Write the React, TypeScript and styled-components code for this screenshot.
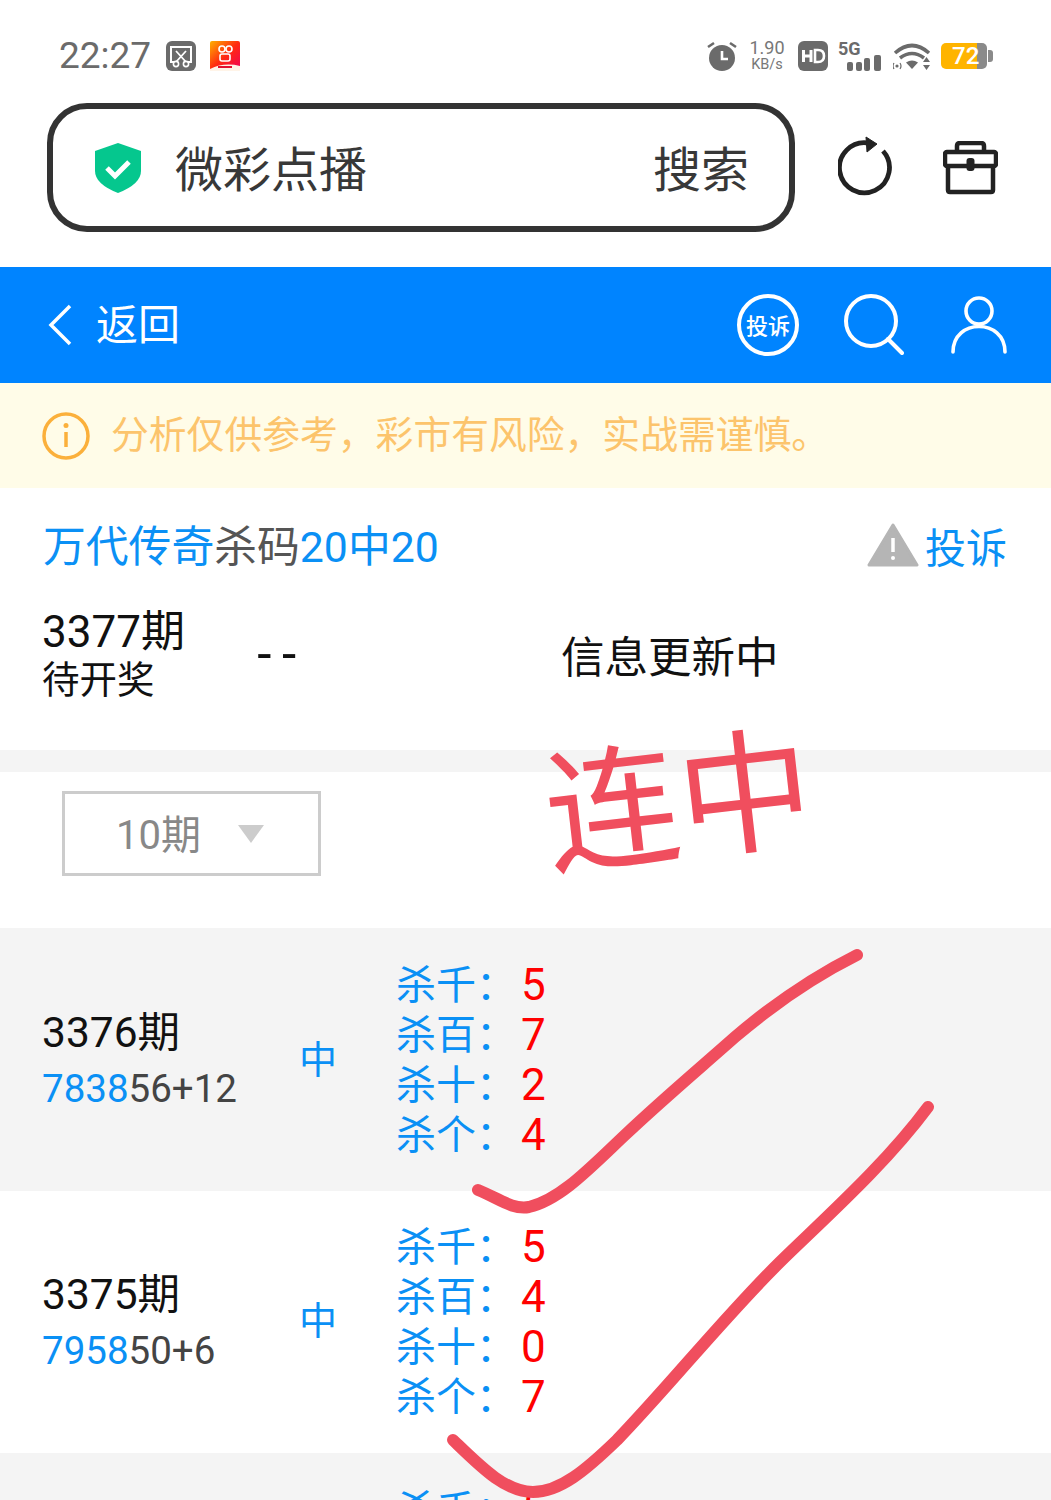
import { createGlobalStyle, styled } from "styled-components";

const GlobalStyle = createGlobalStyle`
  html, body {
    margin: 0;
    padding: 0;
    background: #fff;
  }
  body {
    font-family: "Roboto", "Noto Sans CJK SC", sans-serif;
  }
`;

const Page = styled.div`
  position: relative;
  width: 1051px;
  height: 1500px;
  overflow: hidden;
  background: #fff;
`;

/* phone status bar */
const StatusBar = styled.div`
  height: 95px;
  padding: 8px 58px 0 59px;
  display: flex;
  align-items: center;
  justify-content: space-between;
`;

const StatusGroup = styled.div`
  display: flex;
  align-items: center;
`;

const Clock = styled.span`
  font-size: 37px;
  line-height: 40px;
  color: #6b6b6b;
  margin-right: 15px;
`;

const Speed = styled.div`
  display: flex;
  flex-direction: column;
  align-items: center;
  width: 36px;
  margin: 0 13px 0 11px;
  color: #777;
  font-size: 18px;
  line-height: 17px;
  white-space: nowrap;
  small {
    margin-top: 2px;
    font-size: 14.500px;
    line-height: 14px;
  }
`;

const Battery = styled.div`
  width: 46px;
  height: 26px;
  margin-left: 10px;
  border-radius: 5px;
  overflow: hidden;
  background: linear-gradient(to right, #ffb400 0 36px, #8a8a8a 36px);
  color: #fff;
  font-size: 24px;
  font-weight: 500;
  line-height: 27px;
  padding-left: 11px;
  box-sizing: border-box;
`;

const BatteryTip = styled.div`
  width: 5px;
  height: 12px;
  margin-left: 1px;
  border-radius: 0 3px 3px 0;
  background: #8a8a8a;
`;

/* browser address row */
const AddressRow = styled.div`
  display: flex;
  align-items: center;
  padding-left: 47px;
  margin-bottom: 35px;
`;

const AddressBox = styled.div`
  width: 748px;
  height: 129px;
  box-sizing: border-box;
  border: 6px solid #333;
  border-radius: 40px;
  padding: 0 40px 0 42px;
  display: flex;
  align-items: center;
  color: #383838;
  font-size: 48px;
`;

const AddressName = styled.span`
  margin: 0 0 4px 34px;
  flex: 1;
`;

const AddressAction = styled.span`
  margin-bottom: 4px;
`;

const RefreshSlot = styled.div`
  margin-left: 43px;
  display: flex;
`;

const ToolSlot = styled.div`
  margin-left: 49px;
  display: flex;
`;

/* blue app header */
const AppHeader = styled.div`
  height: 116px;
  background: #0084ff;
  padding: 0 44px 0 48px;
  display: flex;
  align-items: center;
  color: #fff;
`;

const BackLabel = styled.span`
  margin: 0 0 8px 23px;
  font-size: 42px;
  flex: 1;
`;

const ComplainBadge = styled.div`
  width: 62px;
  height: 62px;
  box-sizing: border-box;
  border: 4px solid #fff;
  border-radius: 50%;
  padding-bottom: 3px;
  display: flex;
  align-items: center;
  justify-content: center;
  font-size: 22px;
  font-weight: 500;
  white-space: nowrap;
`;

const HeaderIcon = styled.div<{ $gap: number }>`
  margin-left: ${p => p.$gap}px;
  display: flex;
`;

/* notice */
const Notice = styled.div`
  height: 105px;
  background: #fffce8;
  padding-left: 42px;
  display: flex;
  align-items: center;
  color: #fcc46c;
  font-size: 37.800px;
  white-space: nowrap;
`;

const NoticeText = styled.span`
  margin: 0 0 8px 21px;
`;

/* plan info */
const InfoBlock = styled.div`
  height: 262px;
  padding: 24px 44px 0 42px;
  box-sizing: border-box;
`;

const TitleRow = styled.div`
  display: flex;
  align-items: center;
  justify-content: space-between;
  height: 66px;
  color: #0a90f5;
  font-size: 42.800px;
`;

const TitleText = styled.span`
  margin: 0 0 4px 1px;
`;

const Muted = styled.span`
  color: #555;
`;

const Complain = styled.div`
  display: flex;
  align-items: center;
  gap: 6px;
  font-size: 41px;
`;

const PeriodRow = styled.div`
  display: flex;
  align-items: center;
  margin-top: 28px;
  color: #111;
`;

const PeriodColumn = styled.div`
  width: 214px;
  display: flex;
  flex-direction: column;
`;

const PeriodNo = styled.span`
  font-size: 44px;
  line-height: 52px;
`;

const PeriodState = styled.span`
  font-size: 37.500px;
  line-height: 44px;
`;

const Dashes = styled.span`
  width: 305px;
  margin-bottom: 4px;
  font-family: "Liberation Sans", sans-serif;
  font-size: 50px;
  letter-spacing: 8px;
`;

const Updating = styled.span`
  font-size: 43.500px;
`;

const Band = styled.div`
  height: 22px;
  background: #f4f4f4;
`;

/* period filter */
const FilterBar = styled.div`
  height: 156px;
  padding: 19px 0 0 62px;
  box-sizing: border-box;
`;

const Select = styled.div`
  width: 259px;
  height: 85px;
  box-sizing: border-box;
  border: 3px solid #ccc;
  padding-left: 51px;
  display: flex;
  align-items: center;
  color: #888;
  font-size: 40px;
`;

const SelectLabel = styled.span`
  margin-bottom: 4px;
`;

const Caret = styled.i`
  margin-left: 37px;
  width: 0;
  height: 0;
  border-left: 13px solid transparent;
  border-right: 13px solid transparent;
  border-top: 18px solid #ccc;
`;

/* result rows */
const Row = styled.div<{ $grey: boolean }>`
  height: 262.500px;
  box-sizing: border-box;
  background: ${p => (p.$grey ? "#f4f4f4" : "#fff")};
  padding: 0 0 ${p => (p.$grey ? 0 : 2)}px 42px;
  display: flex;
  align-items: center;
`;

const RowInfo = styled.div`
  width: 257px;
  display: flex;
  flex-direction: column;
  padding-top: 4px;
`;

const RowPeriod = styled.span`
  font-size: 42.500px;
  line-height: 56px;
  color: #111;
`;

const RowNumber = styled.span`
  font-size: 38.500px;
  line-height: 56px;
  color: #444;
  b {
    font-weight: 400;
    color: #0a90f5;
  }
`;

const Hit = styled.span`
  width: 97px;
  margin-bottom: 6px;
  font-size: 38px;
  color: #0a90f5;
`;

const KillList = styled.div`
  display: flex;
  flex-direction: column;
`;

const KillLine = styled.div`
  height: 50px;
  display: flex;
  align-items: center;
  color: #0a90f5;
  font-size: 40px;
`;

const KillLabel = styled.span`
  width: 125px;
  margin-bottom: 4px;
`;

const KillValue = styled.span`
  margin-top: 2px;
  color: #f00;
  font-size: 44px;
`;

/* hand written marks on top of the screenshot */
const Scrawl = styled.svg`
  position: absolute;
  left: 0;
  top: 0;
  pointer-events: none;
`;

const ScrawlText = styled.div`
  position: absolute;
  left: 545px;
  top: 730px;
  color: #f04e5e;
  font-size: 134px;
  font-weight: 400;
  line-height: 150px;
  white-space: nowrap;
  transform: rotate(-6.500deg);
  pointer-events: none;
`;

const rows = [
  { period: "3376期", hot: "7838", rest: "56+12", values: [5, 7, 2, 4], grey: true },
  { period: "3375期", hot: "7958", rest: "50+6", values: [5, 4, 0, 7], grey: false },
  { period: "3374期", hot: "", rest: "", values: [5, 0, 0, 0], grey: true },
];

const killLabels = ["杀千：", "杀百：", "杀十：", "杀个："];

const App = () => {
  return (
    <Page>
      <GlobalStyle />

      <StatusBar>
        <StatusGroup>
          <Clock>22:27</Clock>
          <svg width="30" height="30" viewBox="0 0 30 30">
            <rect width="30" height="30" rx="6" fill="#6b6b6b" />
            <path d="M8 21H5V6h20v15h-3" fill="none" stroke="#fff" strokeWidth="2" />
            <path d="M10 10l10 11M20 10L10 21" stroke="#fff" strokeWidth="1.800" />
            <circle cx="10" cy="23" r="2.600" fill="#6b6b6b" stroke="#fff" strokeWidth="1.600" />
            <circle cx="20" cy="23" r="2.600" fill="#6b6b6b" stroke="#fff" strokeWidth="1.600" />
          </svg>
          <svg width="30" height="30" viewBox="0 0 30 30" style={{ marginLeft: 14 }}>
            <defs>
              <linearGradient id="ks" x1="0" y1="0" x2="1" y2="1">
                <stop offset="0" stopColor="#ffb000" />
                <stop offset="0.5" stopColor="#ff2a10" />
                <stop offset="1" stopColor="#f0005a" />
              </linearGradient>
            </defs>
            <rect width="30" height="30" rx="2" fill="url(#ks)" />
            <circle cx="12" cy="8" r="3" fill="none" stroke="#fff" strokeWidth="1.600" />
            <circle cx="19" cy="8" r="3" fill="none" stroke="#fff" strokeWidth="1.600" />
            <rect x="10" y="13" width="10" height="7" rx="2" fill="none" stroke="#fff" strokeWidth="1.600" />
            <path d="M0 28q14-7 30-3v5H0z" fill="#fff4e8" />
            <path d="M8 26h14" stroke="#e01030" strokeWidth="2" />
          </svg>
        </StatusGroup>

        <StatusGroup>
          <svg width="32" height="32" viewBox="0 0 32 32">
            <circle cx="16" cy="18" r="13" fill="#6b6b6b" />
            <path d="M16 11v8h6" fill="none" stroke="#fff" strokeWidth="2.600" />
            <path d="M2 7l6-4M30 7l-6-4" stroke="#6b6b6b" strokeWidth="2.600" />
          </svg>
          <Speed>
            1.90
            <small>KB/s</small>
          </Speed>
          <svg width="30" height="30" viewBox="0 0 30 30">
            <rect width="30" height="30" rx="6" fill="#6b6b6b" />
            <path d="M5.500 9v12M13 9v12M5.500 15H13" stroke="#fff" strokeWidth="3" />
            <path d="M17 9v12h3q6 0 6-6t-6-6z" fill="none" stroke="#fff" strokeWidth="2.600" />
          </svg>
          <svg width="44" height="32" viewBox="0 0 44 32" style={{ marginLeft: 10 }}>
            <text x="0" y="15" fontSize="18" fontWeight="700" fill="#6b6b6b" fontFamily="Roboto">
              5G
            </text>
            <rect x="9" y="22" width="6" height="9" rx="2" fill="#6b6b6b" />
            <rect x="18" y="22" width="6" height="9" rx="2" fill="#6b6b6b" />
            <rect x="26" y="18" width="6" height="13" rx="2" fill="#6b6b6b" />
            <rect x="36" y="15" width="7" height="16" rx="2" fill="#6b6b6b" />
          </svg>
          <svg width="38" height="30" viewBox="0 0 38 30" style={{ marginLeft: 11 }}>
            <path d="M2 12Q19-3 36 12M7 17q12-9 24 0" fill="none" stroke="#6b6b6b" strokeWidth="3.600" />
            <path d="M13 21.500q6-4 12 0L19 28z" fill="#6b6b6b" />
            <path d="M33.500 16l3.500 5h-7zM33.500 29l3.500-5h-7z" fill="#6b6b6b" />
            <circle cx="4" cy="25" r="1.600" fill="#6b6b6b" />
            <path d="M1 22q-2 3 0 6M7 22q2 3 0 6" fill="none" stroke="#6b6b6b" strokeWidth="1.200" />
          </svg>
          <Battery>72</Battery>
          <BatteryTip />
        </StatusGroup>
      </StatusBar>

      <AddressRow>
        <AddressBox>
          <svg width="46" height="50" viewBox="0 0 46 50">
            <path d="M23 0l23 8v20q0 13-23 22Q0 41 0 28V8z" fill="#05c78e" />
            <path d="M12 25l8 8 14-14" fill="none" stroke="#fff" strokeWidth="5" />
          </svg>
          <AddressName>微彩点播</AddressName>
          <AddressAction>搜索</AddressAction>
        </AddressBox>
        <RefreshSlot>
          <svg width="56" height="66" viewBox="0 0 56 66">
            <path d="M45 16A25 25 0 1 1 30 8" fill="none" stroke="#222" strokeWidth="4.800" />
            <path d="M28 2l11 7-10 8z" fill="#222" stroke="#222" strokeWidth="1" strokeLinejoin="round" />
          </svg>
        </RefreshSlot>
        <ToolSlot>
          <svg width="55" height="54" viewBox="0 0 55 54">
            <path d="M14 11V5q0-3 3-3h21q3 0 3 3v6" fill="none" stroke="#222" strokeWidth="4.500" />
            <path d="M5 25v24q0 2 2 2h41q2 0 2-2V25" fill="none" stroke="#222" strokeWidth="4.500" />
            <rect x="2" y="11" width="51" height="14" rx="2" fill="none" stroke="#222" strokeWidth="4.500" />
            <rect x="23.500" y="17" width="8" height="13" rx="3" fill="#222" />
          </svg>
        </ToolSlot>
      </AddressRow>

      <AppHeader>
        <svg width="25" height="42" viewBox="0 0 25 42">
          <path d="M22 2L3 21l19 19" fill="none" stroke="#fff" strokeWidth="3.500" />
        </svg>
        <BackLabel>返回</BackLabel>
        <ComplainBadge>投诉</ComplainBadge>
        <HeaderIcon $gap={45}>
          <svg width="60" height="62" viewBox="0 0 60 62">
            <circle cx="27" cy="27" r="25" fill="none" stroke="#fff" strokeWidth="4" />
            <path d="M44 45l14 14" stroke="#fff" strokeWidth="4" strokeLinecap="round" />
          </svg>
        </HeaderIcon>
        <HeaderIcon $gap={47}>
          <svg width="56" height="58" viewBox="0 0 56 58">
            <circle cx="28" cy="15" r="13" fill="none" stroke="#fff" strokeWidth="3.600" />
            <path d="M2 56c0-34 52-34 52 0" fill="none" stroke="#fff" strokeWidth="3.600" strokeLinecap="round" />
          </svg>
        </HeaderIcon>
      </AppHeader>

      <Notice>
        <svg width="48" height="48" viewBox="0 0 48 48">
          <circle cx="24" cy="24" r="22" fill="none" stroke="#fbb03b" strokeWidth="3.500" />
          <circle cx="24" cy="13.500" r="2.500" fill="#fbb03b" />
          <path d="M24 20v15" stroke="#fbb03b" strokeWidth="3.500" />
        </svg>
        <NoticeText>分析仅供参考，彩市有风险，实战需谨慎。</NoticeText>
      </Notice>

      <InfoBlock>
        <TitleRow>
          <TitleText>
            万代传奇<Muted>杀码</Muted>20中20
          </TitleText>
          <Complain>
            <svg width="52" height="44" viewBox="0 0 52 44">
              <path d="M26 2L50 42H2z" fill="#b5b5b5" stroke="#b5b5b5" strokeWidth="3" strokeLinejoin="round" />
              <path d="M26 15v14" stroke="#fff" strokeWidth="3.500" />
              <circle cx="26" cy="35" r="2" fill="#fff" />
            </svg>
            投诉
          </Complain>
        </TitleRow>
        <PeriodRow>
          <PeriodColumn>
            <PeriodNo>3377期</PeriodNo>
            <PeriodState>待开奖</PeriodState>
          </PeriodColumn>
          <Dashes>--</Dashes>
          <Updating>信息更新中</Updating>
        </PeriodRow>
      </InfoBlock>

      <Band />

      <FilterBar>
        <Select>
          <SelectLabel>10期</SelectLabel>
          <Caret />
        </Select>
      </FilterBar>

      {rows.map(row => (
        <Row key={row.period} $grey={row.grey}>
          <RowInfo>
            <RowPeriod>{row.period}</RowPeriod>
            <RowNumber>
              <b>{row.hot}</b>
              {row.rest}
            </RowNumber>
          </RowInfo>
          <Hit>中</Hit>
          <KillList>
            {killLabels.map((label, i) => (
              <KillLine key={label}>
                <KillLabel>{label}</KillLabel>
                <KillValue>{row.values[i]}</KillValue>
              </KillLine>
            ))}
          </KillList>
        </Row>
      ))}

      <ScrawlText>连中</ScrawlText>
      <Scrawl width="1051" height="1500" viewBox="0 0 1051 1500">
        <path
          d="M857 955C815 976 775 1003 735 1037C700 1068 662 1100 625 1135C590 1168 560 1200 529 1207C512 1210 498 1198 478 1190"
          fill="none"
          stroke="#f04e5e"
          strokeWidth="12"
          strokeLinecap="round"
        />
        <path
          d="M928 1107C885 1165 825 1218 780 1262C726 1315 670 1385 617 1440C586 1470 560 1492 533 1492C505 1492 480 1466 453 1440"
          fill="none"
          stroke="#f04e5e"
          strokeWidth="12"
          strokeLinecap="round"
        />
      </Scrawl>
    </Page>
  );
};

export default App;
